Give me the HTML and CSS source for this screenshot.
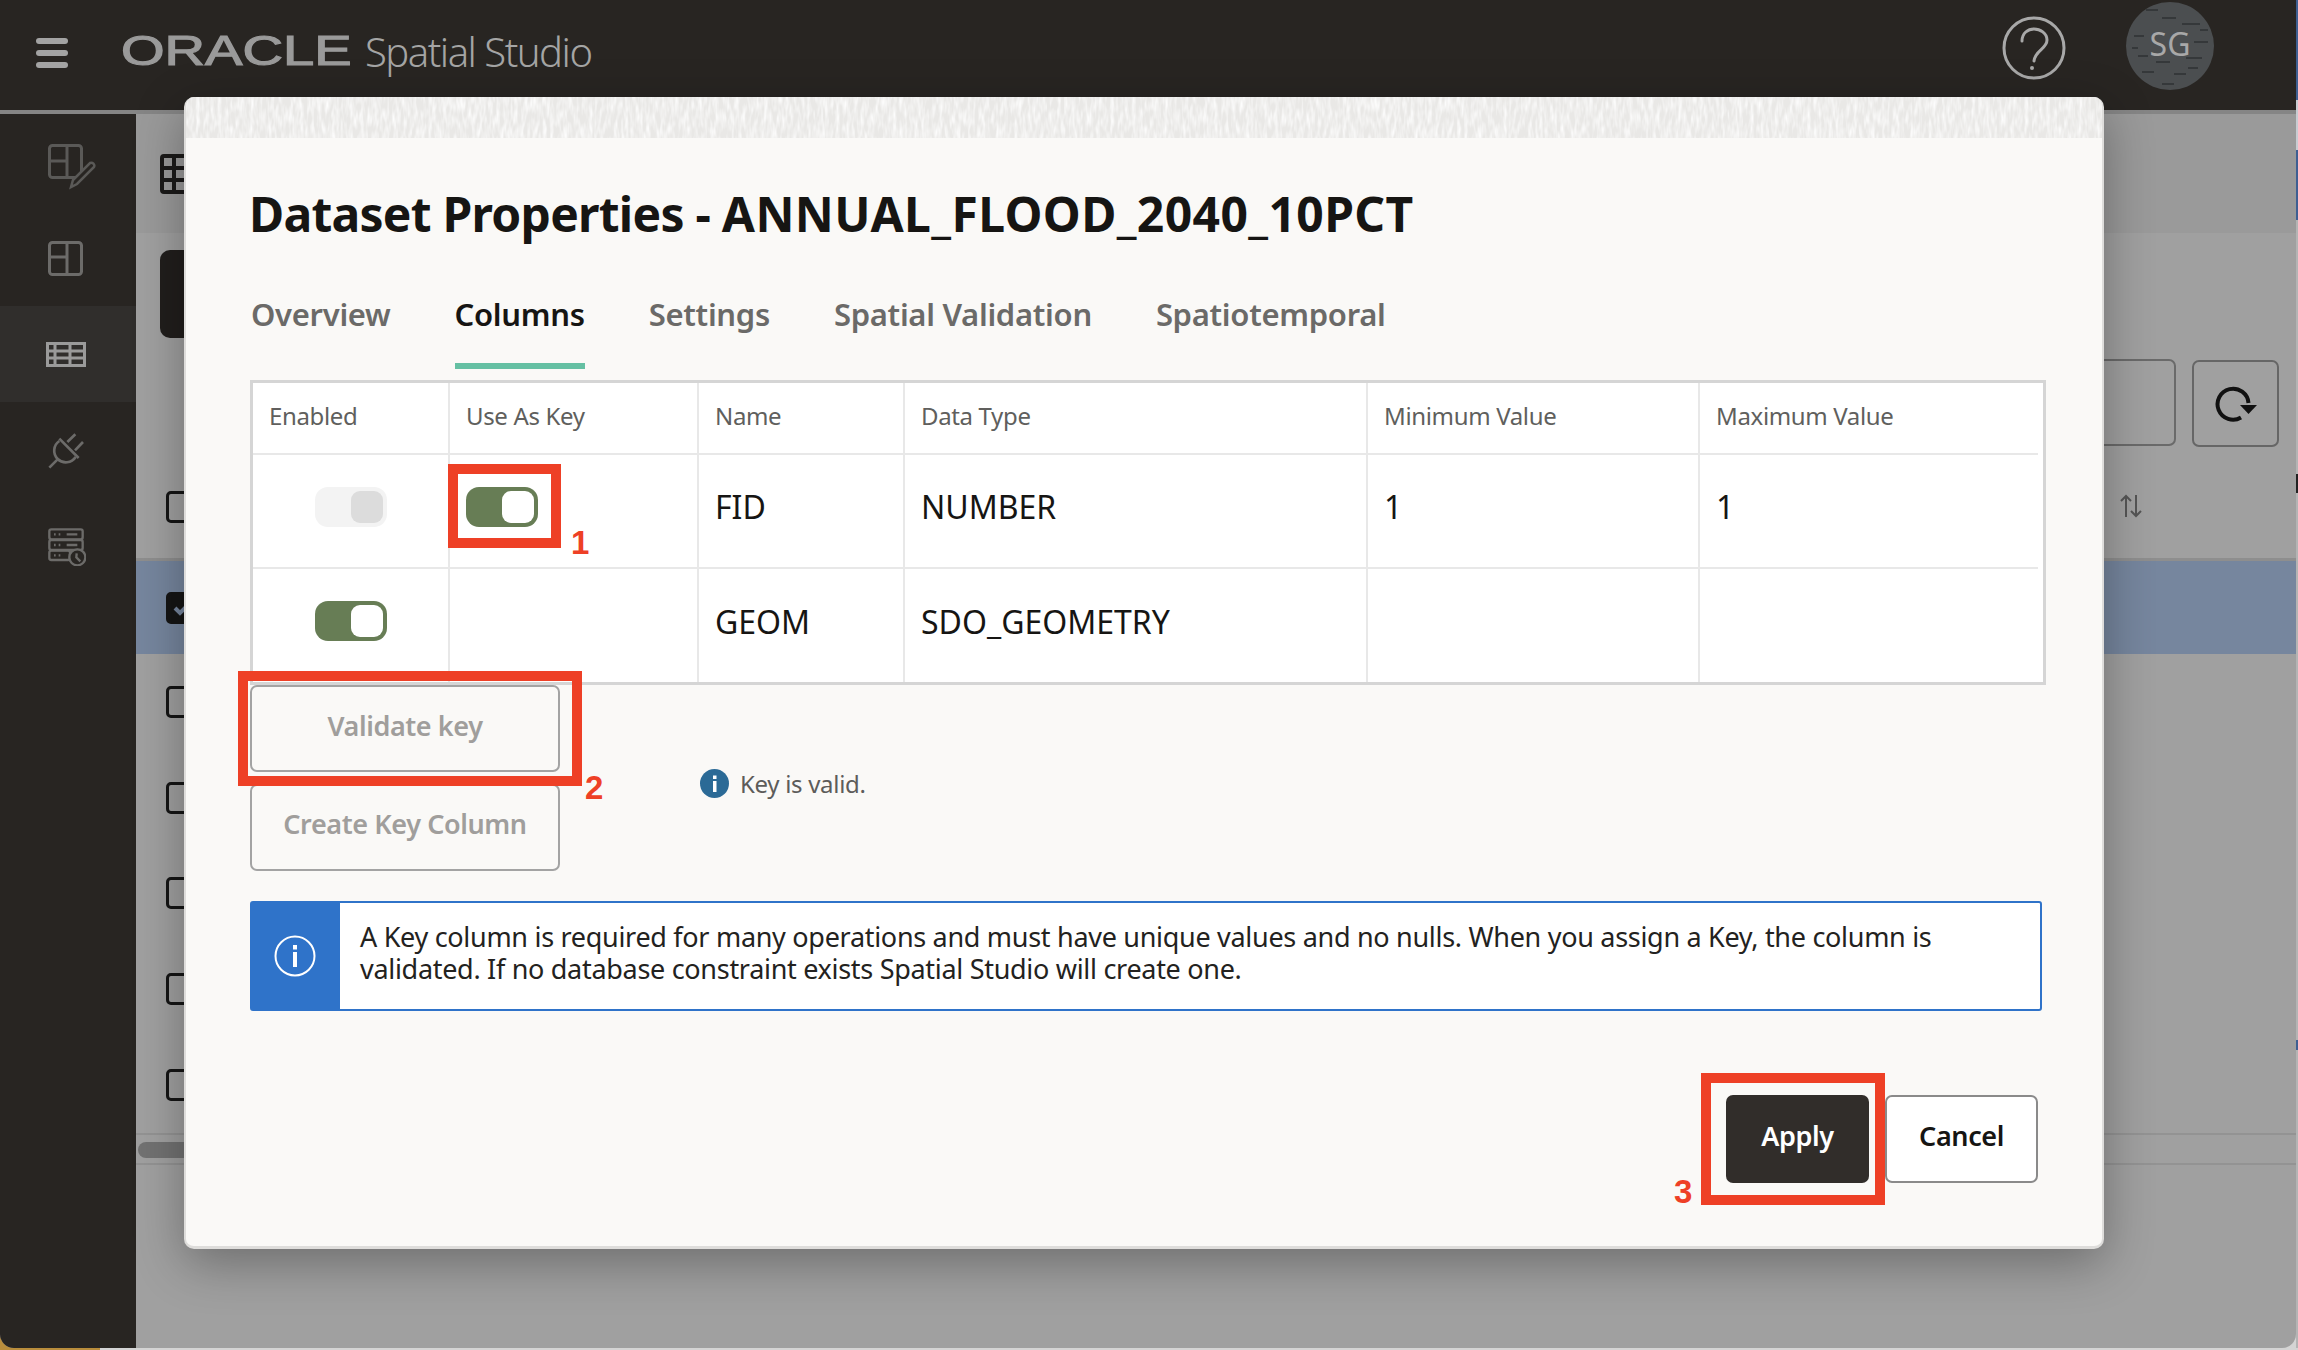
FILE: index.html
```html
<!DOCTYPE html>
<html lang="en">
<head>
<meta charset="utf-8">
<title>Oracle Spatial Studio</title>
<link rel="stylesheet" href="styles.css">
</head>
<body>
<div class="screen">
  <div class="window">
    <header class="topbar">
      <div class="burger"><span></span><span></span><span></span></div>
      <div class="logo">ORACLE</div>
      <div class="product">Spatial Studio</div>
      <div class="spacer"></div>
      <svg class="help" width="64" height="64" viewBox="0 0 64 64" fill="none" stroke="#a8a8a8" stroke-width="3"><circle cx="32" cy="32" r="30"/><path d="M20 25c0-8 6-12 12-12s13 4 13 11c0 9-12 10-13 21" stroke-linecap="round"/><circle cx="30" cy="52" r="2" fill="#a8a8a8" stroke="none"/></svg>
      <svg class="avatar" width="88" height="88" viewBox="0 0 88 88">
        <circle cx="44" cy="44" r="44" fill="#4b4e50"/>
        <path d="M20 8h12M36 16h14M56 22h18M8 34h10M68 40h14M12 54h10M30 60h14M60 56h16M16 70h12M48 72h12M36 82h12M6 46h6M74 28h8M62 66h10" stroke="#35383a" stroke-width="2"/>
        <text x="44" y="54" text-anchor="middle" class="avatar-text">SG</text>
      </svg>
    </header>
    <div class="workspace">
      <nav class="sidebar">
        <div class="nav-item nav-pencil">
          <svg width="48" height="46" viewBox="0 0 48 46" fill="none" stroke="#5a5957" stroke-width="3"><rect x="1.500" y="1.500" width="32" height="32" rx="3"/><path d="M19 2v31M2 17h17"/><path d="M23 43l2-7 17-17a3 3 0 0 1 4 4L29 40z" fill="#282522" stroke-width="2.500"/></svg>
        </div>
        <div class="nav-item">
          <svg width="35" height="35" viewBox="0 0 35 35" fill="none" stroke="#6c6b69" stroke-width="3"><rect x="1.500" y="1.500" width="32" height="32" rx="3"/><path d="M19 2v31M2 16h17"/></svg>
        </div>
        <div class="nav-item nav-wide active">
          <svg width="40" height="25" viewBox="0 0 40 25" fill="none" stroke="#9a9a9a" stroke-width="3"><rect x="1.500" y="1.500" width="37" height="22"/><path d="M9 2v21M24 2v21M2 9h36M2 16h36"/></svg>
        </div>
        <div class="nav-item nav-wide nav-plug">
          <svg width="40" height="40" viewBox="48 335 120 120" fill="none" stroke="#6c6b69" stroke-width="8"><path d="M112 365l24-23M135 390l24-25M88 355l58 58M58 442l24-24"/><path d="M88 362A35 35 0 1 0 137 410"/></svg>
        </div>
        <div class="nav-item nav-wide">
          <svg width="40" height="40" viewBox="48 620 120 120" fill="none" stroke="#6c6b69" stroke-width="7"><rect x="58" y="630" width="100" height="30" rx="6"/><rect x="58" y="662" width="100" height="30" rx="6"/><rect x="58" y="694" width="62" height="28" rx="6"/><path d="M72 645h5M86 645h5M110 645h32M72 677h5M86 677h5M110 677h32M72 708h5M86 708h5"/><circle cx="142" cy="714" r="24" fill="#282522"/><path d="M140 702l-1 12 12 12"/></svg>
        </div>
      </nav>
      <main class="main">
        <div class="main-head">
          <svg class="grid-icon" width="44" height="40" viewBox="0 0 44 40"><rect x="2" y="2" width="40" height="36" rx="2" fill="none" stroke="#1b1a19" stroke-width="4"/><path d="M14 2v36M28 2v36M2 14h40M2 26h40" stroke="#1b1a19" stroke-width="4"/></svg>
        </div>
        <div class="toolbar">
          <div class="dark-btn"></div>
          <div class="tools">
            <div class="search-box"></div>
            <div class="refresh-btn">
              <svg width="42" height="36" viewBox="0 0 42 36" fill="none"><path d="M26 31.500A15.500 15.500 0 1 1 33.500 17" stroke="#111" stroke-width="4"/><path d="M25 19h17l-8.500 9z" fill="#111"/></svg>
            </div>
          </div>
        </div>
        <div class="rows">
          <div class="row row-head"><span class="box"></span>
            <svg class="sort" width="22" height="24" viewBox="0 0 22 24" fill="none" stroke="#555" stroke-width="2"><path d="M6 23V2M1 7l5-5 5 5M16 1v21M11 17l5 5 5-5"/></svg>
          </div>
          <div class="row row-selected"><span class="box box-on"><svg width="26" height="26" viewBox="0 0 26 26" fill="none" stroke="#76869e" stroke-width="4"><path d="M6 13l5 5 9-9"/></svg></span></div>
          <div class="row"><span class="box"></span></div>
          <div class="row"><span class="box"></span></div>
          <div class="row"><span class="box"></span></div>
          <div class="row"><span class="box"></span></div>
          <div class="row"><span class="box"></span></div>
        </div>
        <div class="hscroll"><div class="thumb"></div></div>
      </main>
    </div>
  </div>
  <div class="edge"></div>
</div>

<section class="modal">
  <div class="texture">
    <svg width="100%" height="41"><defs><filter id="weave" x="0" y="0" width="100%" height="100%"><feTurbulence type="fractalNoise" baseFrequency="0.28 0.07" numOctaves="2" seed="4"/><feColorMatrix type="matrix" values="0 0 0 0 1  0 0 0 0 1  0 0 0 0 1  1.800 0 0 0 -0.650"/></filter></defs><rect width="100%" height="41" filter="url(#weave)"/></svg>
  </div>
  <div class="modal-body">
    <h1 class="title"><span class="title-lead">Dataset Properties - </span><span class="title-name">ANNUAL_FLOOD_2040_10PCT</span></h1>
    <div class="tabs">
      <span class="tab">Overview</span>
      <span class="tab tab-active">Columns</span>
      <span class="tab">Settings</span>
      <span class="tab">Spatial Validation</span>
      <span class="tab">Spatiotemporal</span>
    </div>
    <div class="table-frame">
      <table class="cols">
        <colgroup><col class="c1"><col class="c2"><col class="c3"><col class="c4"><col class="c5"><col class="c6"></colgroup>
        <thead>
          <tr><th>Enabled</th><th>Use As Key</th><th>Name</th><th>Data Type</th><th>Minimum Value</th><th>Maximum Value</th></tr>
        </thead>
        <tbody>
          <tr>
            <td class="center"><span class="toggle toggle-off"><i></i></span></td>
            <td><span class="toggle"><i></i></span></td>
            <td>FID</td><td>NUMBER</td><td>1</td><td>1</td>
          </tr>
          <tr>
            <td class="center"><span class="toggle"><i></i></span></td>
            <td></td>
            <td>GEOM</td><td>SDO_GEOMETRY</td><td></td><td></td>
          </tr>
        </tbody>
      </table>
    </div>
    <div class="key-actions">
      <div class="key-buttons">
        <button class="btn btn-disabled">Validate key</button>
        <button class="btn btn-disabled">Create Key Column</button>
      </div>
      <div class="status">
        <svg width="29" height="29" viewBox="0 0 29 29"><circle cx="14.500" cy="14.500" r="14.500" fill="#2b6a96"/><rect x="13" y="12" width="3.500" height="11" fill="#fff"/><rect x="13" y="6.500" width="3.500" height="3.500" fill="#fff"/></svg>
        <span>Key is valid.</span>
      </div>
    </div>
    <div class="banner">
      <div class="banner-icon">
        <svg width="42" height="42" viewBox="0 0 42 42" fill="none"><circle cx="21" cy="21" r="19.500" stroke="#fff" stroke-width="2"/><rect x="19" y="17" width="4" height="15" fill="#fff"/><rect x="19" y="10" width="4" height="4.500" fill="#fff"/></svg>
      </div>
      <p class="banner-text">A Key column is required for many operations and must have unique values and no nulls. When you assign a Key, the column is validated. If no database constraint exists Spatial Studio will create one.</p>
    </div>
    <div class="footer">
      <button class="btn btn-primary">Apply</button>
      <button class="btn btn-cancel">Cancel</button>
    </div>
  </div>
</section>

<div class="mark mark-1"></div><span class="num num-1">1</span>
<div class="mark mark-2"></div><span class="num num-2">2</span>
<div class="mark mark-3"></div><span class="num num-3">3</span>
</body>
</html>
```
FILE: styles.css
```css
* { box-sizing: border-box; }
html, body { margin: 0; padding: 0; }
body {
  width: 2298px;
  height: 1350px;
  overflow: hidden;
  position: relative;
  font-family: "Noto Sans", "Liberation Sans", sans-serif;
  background: linear-gradient(90deg, #b98d3c 0 100px, #d4d4d4 100px);
}
.screen { display: flex; height: 1348px; }
.window {
  flex: 1;
  display: flex;
  flex-direction: column;
  border-radius: 0 0 14px 14px;
  overflow: hidden;
  background: #a0a0a0;
}
.edge {
  width: 2px;
  background: linear-gradient(180deg, #3f5f92 0 100px, #c8ccd2 100px 150px, #3f5f92 150px 220px, #b4b4b4 220px 474px, #222 474px 493px, #b4b4b4 493px 1040px, #3f5f92 1040px 1050px, #b4b4b4 1050px);
}

/* top bar */
.topbar {
  height: 114px;
  flex: none;
  display: flex;
  align-items: center;
  padding: 0 82px 4px 36px;
  background: #282522;
  border-bottom: 4px solid #858585;
}
.burger { width: 32px; display: flex; flex-direction: column; gap: 6px; }
.burger span { height: 6px; border-radius: 3px; background: #a3a3a3; }
.logo {
  flex: none;
  width: 175px;
  margin: -5px 54px 0 53px;
  font-family: "Liberation Sans", sans-serif;
  font-size: 42px;
  line-height: 48px;
  white-space: nowrap;
  color: #9a9a9a;
  -webkit-text-stroke: 1.200px #9a9a9a;
  transform: scaleX(1.335);
  transform-origin: left center;
}
.product {
  margin: -2px 0 0 15px;
  font-size: 40px;
  font-weight: 300;
  letter-spacing: -1.500px;
  line-height: 48px;
  color: #a5a5a5;
}
.spacer { flex: 1; }
.help { flex: none; margin-top: -10px; }
.avatar { flex: none; margin-left: 60px; margin-top: -14px; }
.avatar-text {
  font-family: "Noto Sans", sans-serif;
  font-size: 32px;
  fill: #a8a8a8;
}

/* background app */
.workspace { flex: 1; display: flex; min-height: 0; }
.sidebar { width: 136px; flex: none; background: #282522; }
.nav-item { height: 96px; display: flex; align-items: center; padding-left: 48px; }
.nav-wide { padding-left: 46px; }
.nav-pencil svg { margin-top: 10px; }
.nav-plug svg { margin-top: 3px; }
.active { background: #302e2c; }
.main { flex: 1; min-width: 0; display: flex; flex-direction: column; }
.main-head {
  height: 119px;
  padding: 40px 0 0 24px;
  background: #9a9a9a;
  flex: none;
}
.grid-icon { display: block; }
.toolbar {
  height: 222px;
  flex: none;
  display: flex;
  justify-content: space-between;
  align-items: flex-start;
  padding: 17px 17px 0 24px;
}
.dark-btn { width: 160px; height: 88px; border-radius: 10px; background: #211e1c; }
.tools { display: flex; gap: 16px; margin-top: 109px; }
.search-box { width: 300px; height: 87px; border: 2px solid #6a6a6a; border-radius: 7px; }
.refresh-btn {
  width: 87px;
  height: 87px;
  border: 2px solid #666;
  border-radius: 7px;
  margin-top: 1px;
  display: flex;
  align-items: center;
  justify-content: center;
}
.rows { flex: 1; display: flex; flex-direction: column; min-height: 0; }
.row {
  flex: 1;
  display: flex;
  align-items: center;
  justify-content: space-between;
  padding: 0 19px 0 30px;
  position: relative;
}
.row-head { flex: none; height: 106px; border-bottom: 3px solid #8e8e8e; padding-right: 154px; }
.row-selected { flex: none; height: 93px; background: #76869e; }
.box {
  width: 32px;
  height: 32px;
  border: 3px solid #151515;
  border-radius: 5px;
  display: flex;
  align-items: center;
  justify-content: center;
}
.box-on { background: #151515; }
.sort { margin-top: -2px; }
.hscroll {
  height: 32px;
  flex: none;
  margin-bottom: 183px;
  padding: 7px 0 0 2px;
  border-top: 2px solid #939393;
  border-bottom: 2px solid #939393;
}
.thumb { width: 100px; height: 16px; border-radius: 8px; background: #727272; }

/* modal */
.modal {
  position: absolute;
  left: 184px;
  top: 97px;
  width: 1920px;
  height: 1152px;
  background: #faf9f7;
  border-radius: 10px;
  border: solid #dedddb;
  border-width: 0 2px 3px 2px;
  box-shadow: 0 14px 50px rgba(0, 0, 0, .32);
  overflow: hidden;
}
.texture { height: 41px; background: #e9e8e6; }
.texture svg { display: block; }
.modal-body { padding: 46px 56px 0 65px; }
.title {
  margin: 0 0 0 -2px;
  font-size: 48px;
  font-weight: 700;
  line-height: 60px;
  color: #161513;
}
.title-lead { letter-spacing: -.75px; }
.title-name { letter-spacing: .4px; }
.tabs { display: flex; gap: 64px; margin-top: 50px; }
.tab {
  font-size: 31px;
  font-weight: 600;
  letter-spacing: -.3px;
  line-height: 40px;
  padding-bottom: 29px;
  border-bottom: 6px solid transparent;
  color: #6b6a68;
}
.tab-active { color: #161513; border-bottom-color: #65c0a3; }
.table-frame {
  margin-top: 11px;
  margin-left: -1px;
  height: 305px;
  border: 3px solid #d5d5d5;
  background: #fff;
}
.cols { border-collapse: collapse; table-layout: fixed; width: 1785px; }
.c1 { width: 196px; }
.c2 { width: 249px; }
.c3 { width: 206px; }
.c4 { width: 463px; }
.c5 { width: 332px; }
.c6 { width: 339px; }
.cols th, .cols td {
  padding: 0 0 0 16px;
  text-align: left;
  border-right: 2px solid #e8e8e8;
  border-bottom: 2px solid #e8e8e8;
}
.cols th:last-child, .cols td:last-child { border-right: 0; }
.cols tbody tr:last-child td { border-bottom: 0; }
.cols th {
  height: 71px;
  padding-bottom: 6px;
  font-size: 24px;
  font-weight: 400;
  letter-spacing: -.35px;
  color: #605f5d;
}
.cols td {
  height: 114px;
  padding-bottom: 9px;
  font-size: 32px;
  color: #161513;
}
.cols td.center { text-align: center; padding: 0 0 9px; }
.toggle {
  width: 72px;
  height: 40px;
  margin-bottom: 3px;
  display: inline-flex;
  align-items: center;
  justify-content: flex-end;
  padding-right: 4px;
  border-radius: 13px;
  background: #677d55;
  vertical-align: middle;
}
.toggle i { width: 32px; height: 32px; border-radius: 9px; background: #fff; }
.toggle-off { background: #f3f3f3; }
.toggle-off i { background: #dcdcdc; }
.key-actions { display: flex; align-items: flex-start; margin-left: -1px; }
.key-buttons { display: flex; flex-direction: column; gap: 12px; width: 310px; }
.btn {
  font-family: inherit;
  font-size: 27px;
  font-weight: 600;
  letter-spacing: -.4px;
  border-radius: 7px;
  padding: 0 0 8px;
  background: transparent;
}
.btn-disabled { height: 87px; border: 2px solid #a3a3a3; color: #a09e9c; }
.btn-disabled:first-child { padding-bottom: 6px; }
.status {
  display: flex;
  align-items: center;
  gap: 11px;
  margin: 84px 0 0 140px;
  font-size: 24px;
  letter-spacing: -.3px;
  color: #5d5c5a;
}
.status span { line-height: 28px; }
.banner {
  margin: 30px 0 0 -1px;
  height: 110px;
  width: 1792px;
  display: flex;
  border: 2px solid #2f73c9;
  background: #fff;
  border-radius: 3px;
}
.banner-icon {
  width: 88px;
  flex: none;
  display: flex;
  align-items: center;
  justify-content: center;
  padding-right: 3px;
  background: #2f73c9;
}
.banner-text {
  margin: 0;
  padding: 18px 0 0 20px;
  font-size: 27px;
  letter-spacing: -.3px;
  line-height: 32px;
  color: #232220;
}
.footer { display: flex; justify-content: flex-end; gap: 16px; margin: 84px 8px 0 0; }
.btn-primary { width: 143px; height: 88px; border: 0; background: #312d2a; color: #fff; }
.btn-cancel { width: 153px; height: 88px; border: 2px solid #8a8a8a; color: #161513; background: #fff; }

/* annotations */
.mark { position: absolute; border: 10px solid #ee4026; }
.mark-1 { left: 448px; top: 464px; width: 113px; height: 84px; }
.mark-2 { left: 238px; top: 671px; width: 344px; height: 115px; }
.mark-3 { left: 1701px; top: 1073px; width: 184px; height: 132px; }
.num {
  position: absolute;
  font-family: "Liberation Sans", sans-serif;
  font-size: 33px;
  font-weight: 700;
  line-height: 33px;
  color: #ee4026;
}
.num-1 { left: 571px; top: 526px; }
.num-2 { left: 585px; top: 771px; }
.num-3 { left: 1674px; top: 1175px; }
```
